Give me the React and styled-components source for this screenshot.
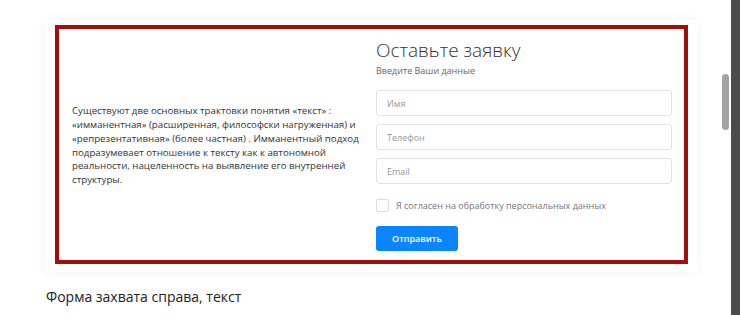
import styled, { createGlobalStyle } from "styled-components";

const GlobalStyle = createGlobalStyle`
  html, body {
    margin: 0;
    padding: 0;
    background: #fff;
    font-family: "Open Sans", "Liberation Sans", sans-serif;
  }
  * { box-sizing: border-box; }
`;

const Screen = styled.div`
  display: flex;
  width: 740px;
  height: 315px;
  overflow: hidden;
`;

const Page = styled.main`
  flex: 1;
  padding: 20px 0 0 45px;
`;

const Card = styled.section`
  width: 652px;
  padding: 5px 9px 8px 10px;
  background: #fff;
  box-shadow: 0 0 10px rgba(0, 0, 0, 0.05);
`;

const Frame = styled.div`
  display: grid;
  grid-template-columns: 290px 296px;
  column-gap: 14px;
  padding: 9px 12px 9px 13px;
  border: 4px solid #a50d0d;
`;

const Lead = styled.p`
  align-self: center;
  margin: 2px 0 0;
  font-size: 9.7px;
  line-height: 13.9px;
  color: #333;
`;

const Form = styled.form`
  display: flex;
  flex-direction: column;
`;

const Title = styled.h2`
  margin: 0;
  font-size: 19px;
  line-height: 24px;
  font-weight: 300;
  color: #333;
`;

const Subtitle = styled.p`
  margin: 2px 0 12px;
  font-size: 9px;
  line-height: 14px;
  color: #666;
`;

const Field = styled.input`
  height: 26px;
  margin-bottom: ${(p) => (p.$last ? "14px" : "8px")};
  padding: 0 10px;
  border: 1px solid #e3e3e3;
  border-radius: 3px;
  font-family: inherit;
  font-size: 9px;
  color: #333;
  outline: none;
  &::placeholder { color: #999; }
`;

const Agree = styled.label`
  display: flex;
  align-items: center;
  gap: 7px;
  height: 14px;
  font-size: 9px;
  color: #777;
`;

const Box = styled.span`
  width: 13px;
  height: 13px;
  border: 1px solid #dcdcdc;
  border-radius: 2px;
  background: #fff;
`;

const Submit = styled.button`
  width: 82px;
  height: 25px;
  margin-top: 14px;
  border: 0;
  border-radius: 3px;
  background: #0a85ff;
  color: #fff;
  font-family: inherit;
  font-size: 9px;
  font-weight: 600;
`;

const Caption = styled.h3`
  margin: 15px 0 0 1px;
  font-size: 14px;
  line-height: 20px;
  font-weight: 400;
  color: #222;
`;

const Rail = styled.div`
  display: flex;
  width: 18px;
`;

const Track = styled.div`
  width: 9px;
  padding: 74px 2px 0 0;
`;

const Thumb = styled.div`
  width: 7px;
  height: 56px;
  border-radius: 4px;
  background: #a3a3a3;
`;

const Edge = styled.div`
  width: 9px;
  background: #4d4b4e;
`;

export default function App() {
  return (
    <>
      <GlobalStyle />
      <Screen>
        <Page>
          <Card>
            <Frame>
              <Lead>
                Существуют две основных трактовки понятия «текст» :
                «имманентная» (расширенная, философски нагруженная) и
                «репрезентативная» (более частная) . Имманентный подход
                подразумевает отношение к тексту как к автономной реальности,
                нацеленность на выявление его внутренней структуры.
              </Lead>
              <Form onSubmit={(e) => e.preventDefault()}>
                <Title>Оставьте заявку</Title>
                <Subtitle>Введите Ваши данные</Subtitle>
                <Field placeholder="Имя" />
                <Field placeholder="Телефон" />
                <Field placeholder="Email" $last />
                <Agree>
                  <Box />
                  Я согласен на обработку персональных данных
                </Agree>
                <Submit type="submit">Отправить</Submit>
              </Form>
            </Frame>
          </Card>
          <Caption>Форма захвата справа, текст</Caption>
        </Page>
        <Rail>
          <Track>
            <Thumb />
          </Track>
          <Edge />
        </Rail>
      </Screen>
    </>
  );
}
